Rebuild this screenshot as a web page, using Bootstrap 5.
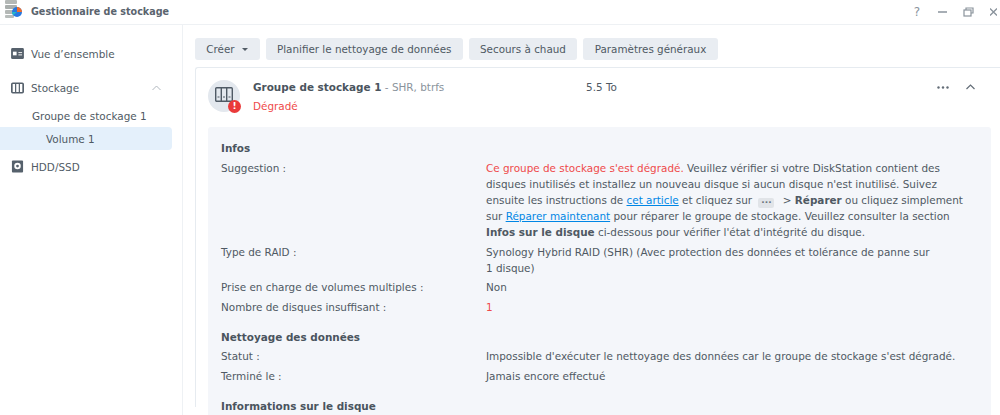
<!DOCTYPE html>
<html lang="fr"><head><meta charset="utf-8"><title>Gestionnaire de stockage</title>
<link href="https://cdn.jsdelivr.net/npm/bootstrap@5.3.0/dist/css/bootstrap.min.css" rel="stylesheet">
<style>
html,body{height:415px;overflow:hidden;background:#fff}
body{font-family:"DejaVu Sans",sans-serif;font-size:10.43px;line-height:16px;color:#4f5963}
.win-head{height:25px;border-bottom:1px solid #eef1f4;padding-left:4px}
.win-title{font-weight:700;font-size:9.6px;color:#5a646e;margin-left:8px}
.win-logo{margin-top:-3px;flex:none;width:19px}
.win-tools{gap:16px;padding-right:3px}
.help-mark{font-size:12px;line-height:1;color:#8a939c;margin-right:2px}
.main-wrap{height:390px}
.side-col{width:183px;flex:none;border-right:1px solid #eef1f4;padding-top:17px}
.side-item{height:23px;padding-left:11px;color:#525c66;gap:7px}
.side-gap{margin-top:11px}
.side-sub{height:23px;padding-left:32px;margin-top:5px}
.side-active{height:23px;padding-left:46px;background:#e4f0fb;width:172px;border-radius:0 4px 4px 0}
.side-last{margin-top:5px}
.chev{margin-left:auto;margin-right:21px}
.content-col{padding:13px 0 0 12px;min-width:0;flex:1}
.tool-row{column-gap:5.800px}
.tool-btn{background:#e9edf2;color:#4f5963;font-size:10.36px;line-height:16px;padding:3px 11.500px;height:22px;border:0;border-radius:3px;white-space:nowrap}
.tool-btn:hover{background:#e9edf2;color:#4f5963}
.tool-narrow{padding-left:11.300px;padding-right:11.300px}
.caret-mini{display:inline-block;border:3px solid transparent;border-top-color:#525c66;border-bottom:0;margin-left:7px;margin-right:1px;vertical-align:2px}
.vol-card{margin-top:7px;border:1px solid #e6ebf0;border-right:0;border-bottom:0;border-radius:3px 0 0 0;padding:11px 9px 0 12px;height:340px}
.vol-top{height:48px}
.vol-icon{width:32px;height:32px;border-radius:50%;background:#e3e8ee;position:relative;margin-right:13px;flex:none;margin-top:1px}
.vol-glyph{margin-bottom:3px}
.vol-alert{position:absolute;right:-1px;bottom:-1px;width:13px;height:13px;border-radius:50%;background:#ea3a3a;color:#fff;font-size:9px;line-height:13px;font-weight:700;text-align:center}
.vol-name{font-weight:700;color:#4a545e}
.vol-meta{color:#8a939c}
.txt-red{color:#ef4a4a}
.vol-state{margin-top:3px}
.vol-sizebox{width:333px;flex:none}
.vol-actions{margin-left:auto;gap:17px;padding-right:16px;height:16px}
.info-panel{background:#f4f6fa;padding:13px 13px 0 13px;border-radius:3px;height:290px;margin-top:0}
.info-head{font-weight:700;color:#4a545e;margin-bottom:4px}
.info-head-tight{margin-bottom:3px}
.info-row{display:flex;margin-bottom:4px}
.info-row-tight{margin-bottom:3px}
.info-key{width:265px;flex:none}
.info-val{width:478px;flex:none}
.sec-gap{margin-top:14px}
.info-val a{color:#0086e5}
.dots-chip{display:inline-block;width:16px;height:10px;background:#e1e4e8;border-radius:2px;margin:0 5px 0 3px;vertical-align:-1px;line-height:9px;text-align:center;font-size:9px;font-weight:700;color:#6b747d}
</style></head><body>
<header class="win-head d-flex align-items-center">
<svg class="win-logo" width="19" height="22" viewBox="0 0 19 22"><rect x="1" y="0" width="12" height="4" rx="1" fill="#b4b8b6"/><rect x="1" y="5" width="12" height="4" rx="1" fill="#a9aeac"/><rect x="1" y="10" width="12" height="4" rx="1" fill="#b4b8b6"/><rect x="1" y="15" width="9" height="3" rx="1" fill="#b8bdbb"/><circle cx="13" cy="12" r="5" fill="#2878e0"/><path d="M13 12V7a5 5 0 0 1 5 5z" fill="#ef6d2d"/><path d="M13 12l-3.800 3.300A5 5 0 0 1 8 12z" fill="#27b7c8"/></svg>
<span class="win-title">Gestionnaire de stockage</span>
<div class="win-tools ms-auto d-flex align-items-center">
<span class="help-mark">?</span>
<svg width="9" height="10" viewBox="0 0 9 10"><path d="M0 5h9" stroke="#8a939c" stroke-width="1.500"/></svg>
<svg width="11" height="10" viewBox="0 0 11 10" fill="none" stroke="#8a939c" stroke-width="1.200"><rect x="1" y="3" width="7" height="6"/><path d="M3 3V1h7v5H8"/></svg>
<svg width="7" height="10" viewBox="0 0 7 10"><path d="M0 1.500l7 7M7 1.500l-7 7" stroke="#8a939c" stroke-width="1.300"/></svg>
</div>
</header>
<div class="main-wrap d-flex">
<aside class="side-col">
<div class="side-item d-flex align-items-center"><svg width="13" height="11" viewBox="0 0 14 12"><rect width="14" height="12" rx="1.500" fill="#56616c"/><rect x="2" y="4" width="4" height="4" fill="#fff"/><path d="M8 5h4M8 7.500h4" stroke="#fff"/></svg>Vue d’ensemble</div>
<div class="side-item side-gap d-flex align-items-center"><svg width="13" height="12" viewBox="0 0 14 12" fill="none" stroke="#56616c" stroke-width="1.800"><rect x=".9" y=".9" width="12.200" height="10.200" rx="1"/><path d="M5 1v10M9 1v10" stroke-width="1.300"/></svg>Stockage<svg class="chev" width="9" height="6" viewBox="0 0 9 6" fill="none" stroke="#b0b7be" stroke-width="1"><path d="M.5 5l4-4 4 4"/></svg></div>
<div class="side-sub d-flex align-items-center">Groupe de stockage 1</div>
<div class="side-active d-flex align-items-center">Volume 1</div>
<div class="side-item side-last d-flex align-items-center"><svg width="13" height="13" viewBox="0 0 14 13"><rect x="1" width="12" height="13" rx="1" fill="#56616c"/><circle cx="7" cy="6" r="3.500" fill="#fff"/><circle cx="7" cy="6" r="1.500" fill="#56616c"/></svg>HDD/SSD</div>
</aside>
<main class="content-col">
<div class="d-flex tool-row">
<button class="btn tool-btn tool-narrow">Créer<span class="caret-mini"></span></button>
<button class="btn tool-btn tool-narrow">Planifier le nettoyage de données</button>
<button class="btn tool-btn">Secours à chaud</button>
<button class="btn tool-btn">Paramètres généraux</button>
</div>
<section class="vol-card">
<div class="vol-top d-flex">
<div class="vol-icon d-flex align-items-center justify-content-center"><svg class="vol-glyph" width="18" height="15" viewBox="0 0 18 15" fill="none" stroke="#4f5a65" stroke-width="1.400"><rect x=".7" y=".7" width="16.600" height="13.600" rx="1"/><path d="M6.300 1v13M11.700 1v13"/><path d="M2.500 10h2M8 10h2M13.500 10h2" stroke-width="1"/></svg><span class="vol-alert">!</span></div>
<div class="vol-sizebox"><div><span class="vol-name">Groupe de stockage 1</span> <span class="vol-meta">- SHR, btrfs</span></div><div class="txt-red vol-state">Dégradé</div></div>
<div>5.5 To</div>
<div class="vol-actions d-flex align-items-center"><svg width="12" height="3" viewBox="0 0 12 3" fill="#636d77"><circle cx="1.500" cy="1.500" r="1.200"/><circle cx="6" cy="1.500" r="1.200"/><circle cx="10.500" cy="1.500" r="1.200"/></svg><svg width="9" height="6" viewBox="0 0 9 6" fill="none" stroke="#636d77" stroke-width="1.200"><path d="M.5 5l4-4 4 4"/></svg></div>
</div>
<div class="info-panel">
<div class="info-head">Infos</div>
<div class="info-row"><div class="info-key">Suggestion :</div><div class="info-val"><span class="txt-red">Ce groupe de stockage s'est dégradé.</span> Veuillez vérifier si votre DiskStation contient des disques inutilisés et installez un nouveau disque si aucun disque n'est inutilisé. Suivez ensuite les instructions de <a href="#">cet article</a> et cliquez sur <span class="dots-chip">···</span> &gt; <b>Réparer</b> ou cliquez simplement sur <a href="#">Réparer maintenant</a> pour réparer le groupe de stockage. Veuillez consulter la section <b>Infos sur le disque</b> ci-dessous pour vérifier l'état d'intégrité du disque.</div></div>
<div class="info-row info-row-tight"><div class="info-key">Type de RAID :</div><div class="info-val">Synology Hybrid RAID (SHR) (Avec protection des données et tolérance de panne sur 1&nbsp;disque)</div></div>
<div class="info-row"><div class="info-key">Prise en charge de volumes multiples :</div><div class="info-val">Non</div></div>
<div class="info-row"><div class="info-key">Nombre de disques insuffisant :</div><div class="info-val txt-red">1</div></div>
<div class="info-head info-head-tight sec-gap">Nettoyage des données</div>
<div class="info-row"><div class="info-key">Statut :</div><div class="info-val">Impossible d'exécuter le nettoyage des données car le groupe de stockage s'est dégradé.</div></div>
<div class="info-row"><div class="info-key">Terminé le :</div><div class="info-val">Jamais encore effectué</div></div>
<div class="info-head sec-gap">Informations sur le disque</div>
</div>
</section>
</main>
</div>
</body></html>
